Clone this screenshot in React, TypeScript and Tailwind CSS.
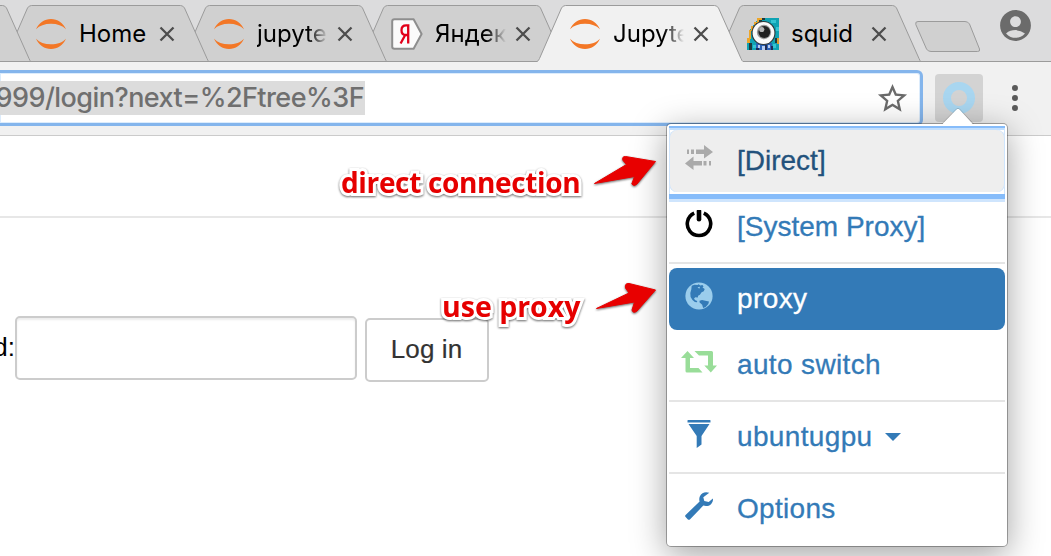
import type { ReactNode } from "react";
import { MdAccountCircle, MdStarBorder } from "react-icons/md";

function JupyterIcon() {
  return (
    <svg viewBox="0 0 32 32" className="h-8 w-8" fill="#f37726">
      <path d="M1 11.300C3.800 4.900 9.500 1 16 1s12.200 3.900 15 10.300C27.500 7.500 22.300 5.700 16 5.700S4.500 7.500 1 11.300z" />
      <path d="M1 20.700C3.800 27.100 9.500 31 16 31s12.200-3.900 15-10.300c-3.500 3.800-8.700 5.600-15 5.600S4.500 24.500 1 20.700z" />
    </svg>
  );
}

function YandexIcon() {
  return (
    <svg viewBox="0 0 32 32" className="h-8 w-8">
      <path d="M3.500 1.200H22.600L30.600 16 22.600 30.800H3.500Q1.200 30.800 1.200 28.500V3.500Q1.200 1.200 3.500 1.200Z" fill="#fbfbfb" stroke="#8e8e8e" strokeWidth="2" strokeLinejoin="round" />
      <path d="M17.200 6.500v19M18.400 7.400h-3.200c-3.200 0-4.700 2-4.700 4.800 0 3 1.600 4.800 4.500 4.800h2.200M14.200 17 9.600 25.500" fill="none" stroke="#e2001a" strokeWidth="2.300" />
    </svg>
  );
}

function SquidIcon() {
  return (
    <svg viewBox="0 0 32 32" className="h-8 w-8">
      <g shapeRendering="crispEdges">
        <path d="M12 0h20v32H0V22l2-2v-8l4-4z" fill="#0fa3b3" />
        <path d="M10 0h5v2h-3v3H9v4H6v4H4v8H3v4H0v-5h2v-8h2V8h3V4h3z" fill="#eda62a" />
        <path d="M30 20h2v6h-2z" fill="#d99a2b" />
        <path d="M15 0h3v2h-3v3h-3V2h3zM9 5h2v3H9zM2 25h3v7H2zM28 20h2v5h-2z" fill="#1f3a3d" />
        <path d="M24 2h5v3h-5zM29 9h3v4h-3zM6 27h3v3H6zM26 26h3v4h-3z" fill="#35c4d2" />
        <path d="M9 25h16v7H9z" fill="#2a62b8" />
        <path d="M11 27h2v3h-2zM15 28h3v4h-3zM21 27h2v3h-2z" fill="#b7cdf0" />
        <path d="M9 30h3v2H9zM18 27h2v5h-2zM24 28h2v4h-2z" fill="#1d2c57" />
      </g>
      <circle cx="16.500" cy="15" r="12" fill="#30383a" />
      <circle cx="16.500" cy="15" r="10.900" fill="#fafafa" />
      <circle cx="17" cy="14" r="7.200" fill="#9a9a9a" />
      <circle cx="17.300" cy="14" r="5.900" fill="#222" />
      <circle cx="14.800" cy="11.500" r="2.600" fill="#b5b5b5" />
    </svg>
  );
}

type TabProps = { title: string; icon: ReactNode; active?: boolean; faded?: boolean; layer: string };

function Tab({ title, icon, active, faded, layer }: TabProps) {
  return (
    <div className={`relative -ml-7 flex h-[62px] w-[206px] shrink-0 items-start ${layer}`}>
      <svg className="absolute inset-0" width="206" height="62" viewBox="0 0 206 62">
        <path
          d="M0 61.500Q1.500 61 2.500 58.500L24.500 8Q26 5.500 28.500 5.500H177.500Q180 5.500 181.500 8L204 58.500Q205 61 206 61.500V62H0Z"
          fill={active ? "#f1f1f1" : "#d0d0d0"}
        />
        <path
          d={
            active
              ? "M0 61.500Q1.500 61 2.500 58.500L24.500 8Q26 5.500 28.500 5.500H177.500Q180 5.500 181.500 8L204 58.500Q205 61 206 61.500"
              : "M0 61.500Q1.500 61 2.500 58.500L24.500 8Q26 5.500 28.500 5.500H177.500Q180 5.500 181.500 8L204 58.500Q205 61 206 61.500H0"
          }
          fill="none"
          stroke="#9b9b9b"
        />
      </svg>
      <div className="relative flex w-full items-center pt-[18px] pl-8">
        {icon}
        <div
          className={`ml-3 w-[71px] shrink-0 overflow-hidden text-[24px] leading-8 whitespace-nowrap text-black ${
            faded ? "[mask-image:linear-gradient(to_right,black_72%,transparent_100%)]" : ""
          }`}
        >
          {title}
        </div>
        <svg className="ml-[9px] shrink-0" width="16" height="16" viewBox="0 0 16 16">
          <path d="M1.500 1.500l13 13M14.500 1.500l-13 13" stroke="#4d4d4d" strokeWidth="2.300" />
        </svg>
      </div>
    </div>
  );
}

function TransferIcon() {
  return (
    <svg viewBox="0 0 28 26" width="28" height="26" fill="#aaa">
      <path d="M11 4.500h8V0l9 7-9 6.500V9h-8zM6 4.500h3V9H6zM2 4.500h2V9H2z" />
      <path d="M17 16H8.500v-4.500L0 18.500 8.500 25v-4.500H17zM18.500 16h3v4.500h-3zM24 16h2v4.500h-2z" />
    </svg>
  );
}

function OffIcon() {
  return (
    <svg viewBox="0 0 28 28" width="28" height="28" fill="none" stroke="#000">
      <path d="M9.200 3.200A11.700 11.700 0 1 0 18.800 3.200" strokeWidth="3.600" />
      <path d="M14 1.200V9.200" strokeWidth="4.600" strokeLinecap="round" />
    </svg>
  );
}

function GlobeIcon() {
  return (
    <svg viewBox="0 0 28 28" width="28" height="28">
      <circle cx="14" cy="14" r="13.600" fill="#9bcdec" />
      <path
        d="M6.700 3.800 9.500 2.800l3 .2 1.200-.8 1.500 1.300 2.300-.6 1 1.700-1 1 2.200 1.400-.9 2.300-2.200.9-1.700 2.500-1.800 1.100-.3 1.800-2.600-.4-1.200 1.500 1.300 1.600 1.900.7-.2 1.300-2.100-.4-2.400-2-1.900-2.800-.3-4 1-3.700z"
        fill="#337ab7"
      />
      <path d="m14.500 18.700 2.500-.6 3.300.6 3.700.8-.7 2.500-2.600 3.100-2.600.8-.9-3.200-2.600-2.200z" fill="#337ab7" />
      <path d="m12.500 5.200 2.600-.5-.8 2z" fill="#9bcdec" />
    </svg>
  );
}

function RetweetIcon() {
  return (
    <svg viewBox="0 0 36 22" width="36" height="22" fill="#99dd99">
      <path d="M6.500 0 13 7H9v10h8.500l4 4.500H6Q4.500 21.500 4.500 20V7H0z" />
      <path d="M13.500 0h17Q32 0 32 1.500V14.500h4L29.800 21.500 23.300 14.500H27V4.500H18z" />
    </svg>
  );
}

function FilterIcon() {
  return (
    <svg viewBox="0 0 28 28" width="28" height="28" fill="#337ab7">
      <path d="M3 0h22q.5 0 .5.500v1.500q0 .5-.5.500H3q-.5 0-.5-.500V.5Q2.500 0 3 0zM3.500 4h21L16.500 16v8.500L11.700 28V16z" />
    </svg>
  );
}

function WrenchIcon() {
  return (
    <svg viewBox="0 0 28 28" width="28" height="28" fill="#337ab7">
      <path d="M24.300.8C20.500-.6 16.600.6 14.900 4.200c-.8 1.800-.8 3.700-.3 5.300L.6 23q-1 1 0 2l2.300 2.400q1 .9 2 0L18.300 13.600c2.700 1 5.900.4 7.900-1.700 1.500-1.600 2-3.500 1.700-5.300l-4.200 3.300-4.400-1-1-3.600z" />
    </svg>
  );
}

type RowProps = { icon: ReactNode; label: ReactNode; row?: string; tracking?: string };

function Row({ icon, label, row = "text-[#337ab7]", tracking = "" }: RowProps) {
  return (
    <div className={`flex h-[62px] shrink-0 items-center rounded-lg [-webkit-text-stroke:0.3px_currentColor] ${row}`}>
      <div className="flex w-[60px] shrink-0 justify-center pb-1.5">{icon}</div>
      <div className={`ml-2 flex items-center text-[28px] leading-10 whitespace-nowrap ${tracking}`}>{label}</div>
    </div>
  );
}

function Divider() {
  return <div className="h-[2px] shrink-0 bg-[#e5e5e5]" />;
}

function ProxyMenu() {
  return (
    <div className="absolute top-[123px] left-[666px] z-20 h-[424px] w-[342px] rounded-[5px] border border-black/30 bg-white bg-clip-padding font-['Liberation_Sans',sans-serif] shadow-[0_8px_34px_rgba(0,0,0,0.36)]">
      <svg className="absolute -top-[17px] left-[274px]" width="34" height="18" viewBox="0 0 34 18">
        <path d="M1 17.500 15.500 2.500q1.500-1.500 3 0L32 17.500V18H1z" fill="#fff" />
        <path d="M1 16.800 15.500 2q1.500-1.500 3 0L32.500 16.800" fill="none" stroke="#000" strokeOpacity=".2" strokeWidth=".8" />
      </svg>
      <div className="absolute inset-x-[2px] top-[2px] h-[76px] border-x border-t-4 border-b-8 border-[#cfe5fd] border-t-[#c3dffd]">
        <div className="absolute -inset-x-px -top-1 h-[2px] bg-[#86bcfa]" />
        <div className="absolute -inset-x-px -bottom-[5px] h-[5px] bg-[#86bcfa]" />
      </div>
      <div className="relative flex flex-col gap-1 px-[2px] pt-[6px]">
        <Row
          icon={<TransferIcon />}
          label="[Direct]"
          row="bg-[#eee] text-[#23527c] shadow-[inset_1px_0_0_#cfe5fd,inset_-1px_0_0_#cfe5fd]"
        />
        <Row icon={<OffIcon />} label="[System Proxy]" />
        <Divider />
        <Row icon={<GlobeIcon />} label="proxy" tracking="tracking-[0.4px]" row="bg-[#337ab7] text-white" />
        <Row icon={<RetweetIcon />} label="auto switch" tracking="tracking-[0.35px]" />
        <Divider />
        <Row
          icon={<FilterIcon />}
          tracking="tracking-[0.35px]"
          label={
            <>
              ubuntugpu
              <span className="ml-3 border-x-8 border-t-8 border-x-transparent border-t-[#337ab7]" />
            </>
          }
        />
        <Divider />
        <Row icon={<WrenchIcon />} label="Options" tracking="tracking-[0.3px]" />
      </div>
    </div>
  );
}

function Callout({ text, place }: { text: string; place: string }) {
  return (
    <div
      className={`absolute z-10 font-['Open_Sans',sans-serif] leading-9 font-bold whitespace-nowrap text-[#e60000] [-webkit-text-stroke:6px_white] [paint-order:stroke_fill] [stroke-linejoin:round] [filter:drop-shadow(0_1px_1px_rgba(0,0,0,0.6))] ${place}`}
    >
      {text}
    </div>
  );
}

function Arrows() {
  return (
    <svg className="pointer-events-none absolute top-[150px] left-[590px] z-30 drop-shadow-[0_1px_1px_rgba(0,0,0,0.6)]" width="70" height="170" viewBox="590 150 70 170">
      <g fill="#e80000" stroke="#e80000" strokeLinejoin="round" strokeWidth="1">
        <path d="M594.500 183.500 626.500 164.500 623 160.500Q621.500 156.500 625.500 156.500L655.500 161.500 637 184Q634 187 631.800 184L634.500 176.500Z" />
        <path d="M596.500 308.500 629 293 625.500 288Q624.500 283 629 283.500L655.500 290 637 311Q633 314 632 310L634.500 302Z" />
      </g>
    </svg>
  );
}

export default function App() {
  return (
    <div className="relative flex h-[556px] w-[1051px] flex-col overflow-hidden bg-white font-['Inter',sans-serif]">
      <header className="flex h-[62px] shrink-0 items-start border-b border-[#9b9b9b] bg-[#dcdcdd]">
        <div className="-ml-[147px] flex shrink-0">
          <Tab title="" icon={<span className="w-8" />} layer="z-[5]" />
          <Tab title="Home" icon={<JupyterIcon />} layer="z-[4]" />
          <Tab title="jupyter" icon={<JupyterIcon />} faded layer="z-[3]" />
          <Tab title="Яндекс" icon={<YandexIcon />} faded layer="z-[2]" />
          <Tab title="Jupyter" icon={<JupyterIcon />} active faded layer="z-[6]" />
          <Tab title="squid" icon={<SquidIcon />} layer="z-[1]" />
        </div>
        <svg className="mt-5 -ml-2 shrink-0" width="70" height="34" viewBox="913 20 70 34">
          <path d="M918 21.500H965Q968 21.500 969.500 24L979.500 49Q980.500 51.500 977.500 51.500H931Q928 51.500 926.500 49L915.800 24.500Q915 21.500 918 21.500Z" fill="#d0d0d0" stroke="#9b9b9b" />
        </svg>
        <MdAccountCircle className="mt-[7px] ml-[14px] shrink-0" size={37} color="#6b6b6b" />
      </header>

      <div className="flex h-[74px] shrink-0 items-start border-b border-[#cbcbcb] bg-[#f1f1f1] pt-2">
        <div className="flex h-14 w-[923px] items-center justify-between rounded-r-md border-[3px] border-l-0 border-[#84b5ec] bg-white pr-[10px] shadow-[inset_0_0_0_1px_#dcecfc]">
          <div className="flex h-[34px] w-[365px] items-center justify-end overflow-hidden bg-[#dcdcdc] pt-px pr-[1px] text-[27px] font-[450] tracking-[-0.55px] whitespace-nowrap text-[#6f6f6f]">
            999/login?next=%2Ftree%3F
          </div>
          <MdStarBorder size={35} color="#6b6b6b" />
        </div>
        <div className="mt-1 ml-3 flex h-12 w-12 items-center justify-center rounded bg-[#d3d3d3]">
          <div className="h-8 w-8 rounded-full border-8 border-[#a9d6f0]" />
        </div>
        <div className="mt-[15px] ml-[29px] flex flex-col gap-1">
          <span className="h-[6px] w-[6px] rounded-full bg-[#5a5a5a]" />
          <span className="h-[6px] w-[6px] rounded-full bg-[#5a5a5a]" />
          <span className="h-[6px] w-[6px] rounded-full bg-[#5a5a5a]" />
        </div>
      </div>

      <main className="flex flex-1 flex-col font-['Liberation_Sans',sans-serif]">
        <div className="h-[82px] shrink-0 border-b-2 border-[#e7e7e7]" />
        <div className="flex items-start pt-[98px] text-[26px]">
          <span className="mt-[11px] flex w-[15px] shrink-0 justify-end leading-10 text-black">d:</span>
          <div className="h-16 w-[342px] rounded-[5px] border-2 border-[#ccc] bg-white shadow-[inset_0_2px_2px_rgba(0,0,0,0.075)]" />
          <button className="mt-[2px] ml-2 h-16 w-[124px] rounded-[5px] border-2 border-[#ccc] bg-white pr-[1px] pb-[2px] tracking-[0.1px] text-[#333] [-webkit-text-stroke:0.2px_currentColor]">
            Log in
          </button>
        </div>
      </main>

      <Callout text="direct connection" place="top-[164px] left-[341px] text-[28px] tracking-[-0.35px]" />
      <Callout text="use proxy" place="top-[288px] left-[442px] text-[28.5px]" />
      <ProxyMenu />
      <Arrows />
    </div>
  );
}
